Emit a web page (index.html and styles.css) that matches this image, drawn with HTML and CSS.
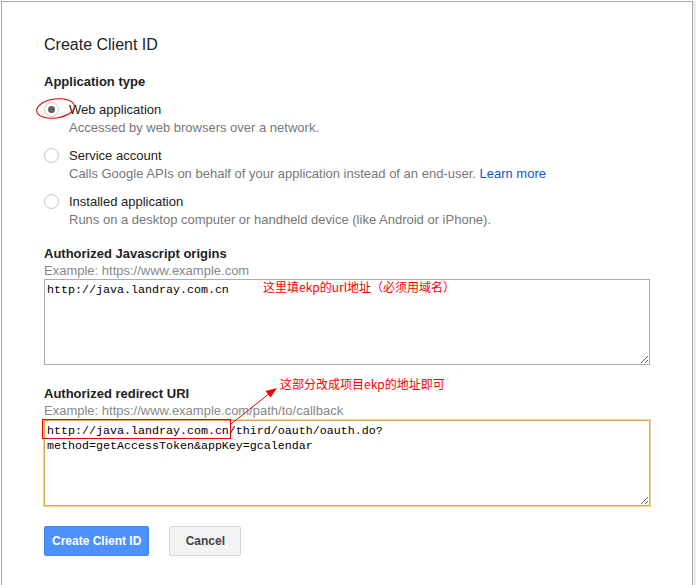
FILE: index.html
```html
<!DOCTYPE html>
<html lang="en">
<head>
<meta charset="utf-8">
<title>Create Client ID</title>
<link rel="stylesheet" href="styles.css">
</head>
<body>
<div class="dialog">
  <h1 class="title">Create Client ID</h1>
  <h2 class="section-label">Application type</h2>
  <div class="radio-group">
    <div class="radio-option">
      <span class="radio checked"></span>
      <div class="radio-text">
        <div class="radio-label">Web application</div>
        <div class="radio-desc">Accessed by web browsers over a network.</div>
      </div>
    </div>
    <div class="radio-option">
      <span class="radio"></span>
      <div class="radio-text">
        <div class="radio-label">Service account</div>
        <div class="radio-desc">Calls Google APIs on behalf of your application instead of an end-user. <a class="link" href="#">Learn more</a></div>
      </div>
    </div>
    <div class="radio-option">
      <span class="radio"></span>
      <div class="radio-text">
        <div class="radio-label">Installed application</div>
        <div class="radio-desc">Runs on a desktop computer or handheld device (like Android or iPhone).</div>
      </div>
    </div>
  </div>

  <h2 class="field-label first-field">Authorized Javascript origins</h2>
  <div class="hint">Example: https://www.example.com</div>
  <textarea class="field" spellcheck="false">http://java.landray.com.cn</textarea>

  <h2 class="field-label">Authorized redirect URI</h2>
  <div class="hint">Example: https://www.example.com/path/to/callback</div>
  <textarea class="field focused" spellcheck="false">http://java.landray.com.cn/third/oauth/oauth.do?
method=getAccessToken&amp;appKey=gcalendar</textarea>

  <div class="actions">
    <button class="btn btn-primary" type="button">Create Client ID</button>
    <button class="btn btn-default" type="button">Cancel</button>
  </div>
</div>

<span class="note note-origin">这里填ekp的url地址（必须用域名）</span>
<span class="note note-redirect">这部分改成项目ekp的地址即可</span>
<svg class="marks" width="696" height="585" viewBox="0 0 696 585" aria-hidden="true">
  <ellipse cx="55.5" cy="108.5" rx="19" ry="9.5" transform="rotate(-8 55.5 108.5)" fill="none" stroke="#e00" stroke-width="1"/>
  <rect x="42.5" y="419.5" width="188" height="19" fill="none" stroke="#e00" stroke-width="1"/>
  <line x1="231" y1="424" x2="270" y2="393" stroke="#e00" stroke-width="1"/>
  <polygon points="277,388 270.7,397.6 265.5,391" fill="#e00"/>
</svg>
</body>
</html>
```
FILE: styles.css
```css
html, body {
  margin: 0;
  padding: 0;
  background: #fff;
}

body {
  position: relative;
  width: 696px;
  height: 585px;
  overflow: hidden;
  font-family: "Liberation Sans", Arial, sans-serif;
  color: #222;
}

.dialog {
  box-sizing: border-box;
  width: 692px;
  height: 584px;
  margin: 1px 0 0 1px;
  padding: 33px 42px 0;
  background: #fff;
  border: 1px solid #a8a8a8;
  border-bottom: none;
  box-shadow: 3px 0 0 #ececec;
}

.title {
  margin: 0;
  font-size: 16px;
  line-height: 20px;
  font-weight: normal;
  color: #222;
}

.section-label,
.field-label {
  margin: 18px 0 0;
  font-size: 13px;
  line-height: 17px;
  font-weight: bold;
  color: #222;
}

.radio-group {
  display: flex;
  flex-direction: column;
  gap: 10px;
  margin-top: 11px;
}

.radio-option {
  display: flex;
  align-items: flex-start;
  gap: 10px;
}

.radio {
  box-sizing: border-box;
  flex: none;
  width: 15px;
  height: 15px;
  margin-top: 1px;
  border: 1px solid #c6c6c6;
  border-radius: 50%;
  background: #fff;
  display: flex;
  align-items: center;
  justify-content: center;
}

.radio.checked::after {
  content: "";
  width: 7px;
  height: 7px;
  border-radius: 50%;
  background: #606060;
}

.radio-text {
  font-size: 13px;
  line-height: 18px;
}

.radio-label {
  color: #222;
}

.radio-desc {
  color: #777;
}

.link {
  color: #15c;
  text-decoration: none;
}

.field-label {
  margin-top: 20px;
}

.field-label.first-field {
  margin-top: 16px;
}

.hint {
  font-size: 13px;
  line-height: 17px;
  color: #888;
}

.field {
  display: block;
  box-sizing: border-box;
  width: 100%;
  height: 86px;
  margin: 0;
  padding: 3px 2px;
  border: 1px solid #ababab;
  border-radius: 0;
  background: #fff;
  font-family: "Liberation Mono", "Courier New", monospace;
  font-size: 11.67px;
  line-height: 15px;
  color: #000;
  outline: none;
}

.field.focused {
  margin-top: 1px;
  border-color: #d9a64a;
  box-shadow: 0 0 0 1px #f1d79c;
}

.actions {
  display: flex;
  gap: 20px;
  margin-top: 20px;
}

.btn {
  box-sizing: border-box;
  min-width: 72px;
  height: 30px;
  padding: 0 7px;
  border-radius: 2px;
  font-family: "Liberation Sans", Arial, sans-serif;
  font-size: 12px;
  font-weight: bold;
  line-height: 28px;
}

.btn-primary {
  background: #4d90fe;
  border: 1px solid #3f84f5;
  color: #fff;
}

.btn-default {
  background: #f3f3f3;
  border: 1px solid #d6d6d6;
  color: #444;
}

.note {
  position: absolute;
  font-family: "Noto Sans CJK SC", sans-serif;
  font-size: 12px;
  line-height: 14px;
  color: #f00;
  white-space: nowrap;
}

.note-origin {
  left: 263px;
  top: 280px;
}

.note-redirect {
  left: 280px;
  top: 377px;
}

.marks {
  position: absolute;
  left: 0;
  top: 0;
  pointer-events: none;
}
```
